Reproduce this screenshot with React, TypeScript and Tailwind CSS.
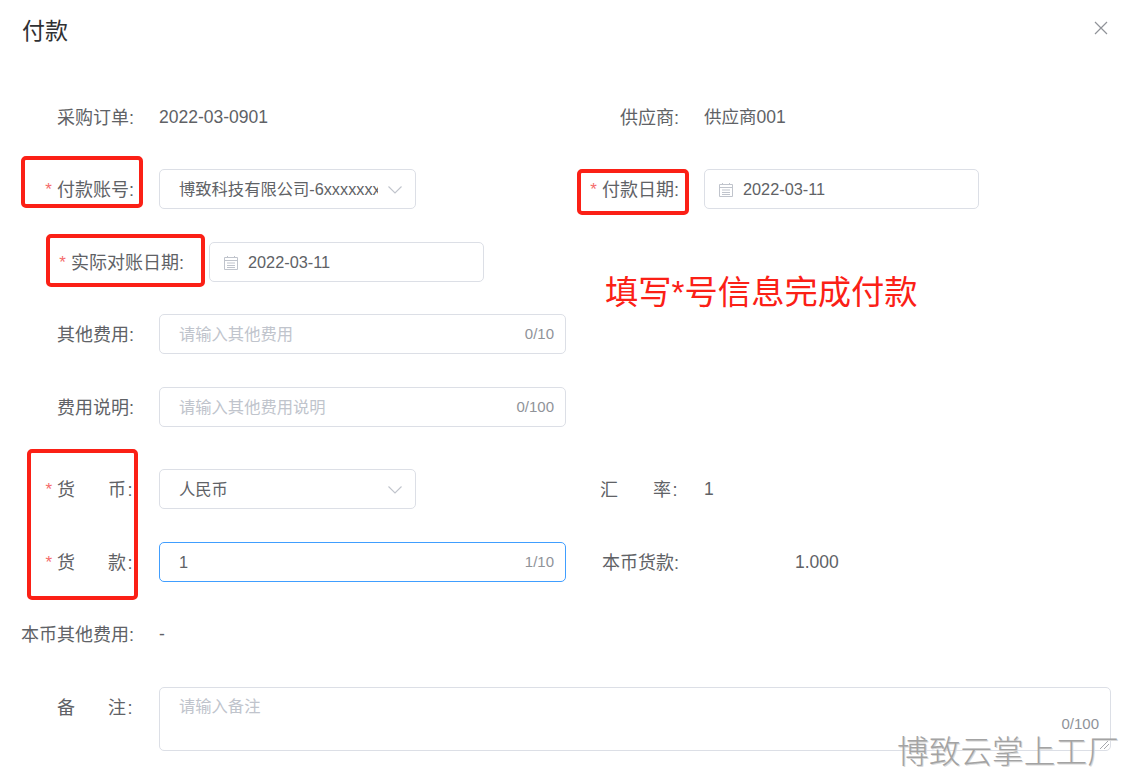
import type { ReactNode } from 'react'

const FONT = 'font-["Liberation_Sans","Noto_Sans_CJK_SC",sans-serif]'

function Label({ children, width, required }: { children: ReactNode; width: number; required?: boolean }) {
  return (
    <div style={{ width }} className="flex h-10 shrink-0 items-center justify-end whitespace-nowrap pt-[2px] text-[18px] text-[#606266]">
      {required && <span className="mr-[5px] text-[17px] leading-[22px] text-[#f56c6c]">*</span>}
      {children}
    </div>
  )
}

// 两字标签两端对齐
function Spread({ a, b, width = 77 }: { a: string; b: string; width?: number }) {
  return (
    <span style={{ width }} className="flex justify-between">
      <span>{a}</span>
      <span className="tracking-[1.5px]">{b}:</span>
    </span>
  )
}

function Value({ children }: { children: ReactNode }) {
  return <div className="ml-[25px] flex h-10 items-center text-[17.5px] text-[#606266]">{children}</div>
}

function Box({ children, width, focus }: { children: ReactNode; width: number; focus?: boolean }) {
  return (
    <div
      style={{ width }}
      className={`ml-[25px] flex h-10 items-center rounded-[5px] border pt-[1px] text-[16.3px] text-[#606266] ${
        focus ? 'border-[#409eff]' : 'border-[#dcdfe6]'
      }`}
    >
      {children}
    </div>
  )
}

function Chevron() {
  return (
    <svg width="14" height="8" viewBox="0 0 14 8" fill="none" className="shrink-0">
      <path d="M.5.5 7 7l6.5-6.5" stroke="#c0c4cc" strokeWidth="1.1" />
    </svg>
  )
}

function DateBox({ value }: { value: string }) {
  return (
    <Box width={275}>
      <svg width="16" height="16" viewBox="0 0 16 16" fill="none" className="ml-[13px] shrink-0">
        <path d="M1.5 2.5h13v12h-13zM1.5 5.5h13" stroke="#c0c4cc" />
        <path d="M4.5 1v2M11.5 1v2M4 8h8M4 10.5h8M4 12.5h8" stroke="#c0c4cc" />
      </svg>
      <span className="ml-[9px]">{value}</span>
    </Box>
  )
}

function Select({ value }: { value: string }) {
  return (
    <Box width={257}>
      <span className="ml-[19px] w-[199px] overflow-hidden whitespace-nowrap">{value}</span>
      <span className="ml-[10px] flex">
        <Chevron />
      </span>
    </Box>
  )
}

function CountInput({ placeholder, value, count }: { placeholder?: string; value?: string; count: string }) {
  return (
    <Box width={407} focus={!!value}>
      <span className={`ml-[19px] flex-1 ${value ? '' : 'text-[#c0c4cc]'}`}>{value ?? placeholder}</span>
      <span className="mr-[11px] text-[15px] text-[#909399]">{count}</span>
    </Box>
  )
}

function Row({ left, right, className }: { left: ReactNode; right?: ReactNode; className: string }) {
  return (
    <div className={`flex ${className}`}>
      <div className="flex w-[544px] shrink-0">{left}</div>
      {right && <div className="ml-[34px] flex">{right}</div>}
    </div>
  )
}

// 标注红框
function RedBox({ className }: { className: string }) {
  return <div className={`absolute rounded-[5px] border-4 border-[#fb2016] ${className}`} />
}

export default function App() {
  return (
    <div className={`relative h-[776px] w-[1127px] overflow-hidden bg-white ${FONT}`}>
      <div className="flex items-start justify-between pl-[22px] pr-[19px] pt-[15px]">
        <h2 className="text-[23px] leading-8 text-[#303133]">付款</h2>
        <svg width="14" height="14" viewBox="0 0 14 14" fill="none" className="mt-[6px]">
          <path d="M1 1l12 12M13 1 1 13" stroke="#909399" strokeWidth="1.2" />
        </svg>
      </div>

      <div className="pl-[22px] pt-[50px]">
        <Row
          className=""
          left={
            <>
              <Label width={112}>采购订单:</Label>
              <Value>2022-03-0901</Value>
            </>
          }
          right={
            <>
              <Label width={79}>供应商:</Label>
              <Value>供应商001</Value>
            </>
          }
        />
        <Row
          className="mt-[32px]"
          left={
            <>
              <Label width={112} required>
                付款账号:
              </Label>
              <Select value="博致科技有限公司-6xxxxxxxxxxxx" />
            </>
          }
          right={
            <>
              <Label width={79} required>
                付款日期:
              </Label>
              <DateBox value="2022-03-11" />
            </>
          }
        />
        <Row
          className="mt-[33px]"
          left={
            <>
              <Label width={162} required>
                实际对账日期:
              </Label>
              <DateBox value="2022-03-11" />
            </>
          }
        />
        <Row
          className="mt-[32px]"
          left={
            <>
              <Label width={112}>其他费用:</Label>
              <CountInput placeholder="请输入其他费用" count="0/10" />
            </>
          }
        />
        <Row
          className="mt-[33px]"
          left={
            <>
              <Label width={112}>费用说明:</Label>
              <CountInput placeholder="请输入其他费用说明" count="0/100" />
            </>
          }
        />
        <Row
          className="mt-[42px]"
          left={
            <>
              <Label width={112} required>
                <Spread a="货" b="币" />
              </Label>
              <Select value="人民币" />
            </>
          }
          right={
            <>
              <Label width={79}>
                <Spread a="汇" b="率" width={79} />
              </Label>
              <Value>1</Value>
            </>
          }
        />
        <Row
          className="mt-[33px]"
          left={
            <>
              <Label width={112} required>
                <Spread a="货" b="款" />
              </Label>
              <CountInput value="1" count="1/10" />
            </>
          }
          right={
            <>
              <Label width={79}>本币货款:</Label>
              <Value>
                <span className="ml-[91px]">1.000</span>
              </Value>
            </>
          }
        />
        <Row
          className="mt-[32px]"
          left={
            <>
              <Label width={112}>本币其他费用:</Label>
              <Value>-</Value>
            </>
          }
        />
        <div className="mt-[33px] flex">
          <Label width={112}>
            <Spread a="备" b="注" />
          </Label>
          <div className="relative ml-[25px] h-16 w-[952px] rounded-[5px] border border-[#dcdfe6] text-[16.3px]">
            <span className="absolute left-[19px] top-[6px] text-[#c0c4cc]">请输入备注</span>
            <span className="absolute bottom-[15px] right-[11px] text-[15px] text-[#909399]">0/100</span>
            <svg width="12" height="12" viewBox="0 0 12 12" className="absolute bottom-0 right-0" fill="none">
              <path d="M2 11 11 2M6 11l5-5" stroke="#909399" strokeWidth="0.8" />
            </svg>
          </div>
        </div>
      </div>

      {/* 标注 */}
      <RedBox className="left-[21px] top-[156px] h-[52px] w-[122px]" />
      <RedBox className="left-[46px] top-[234px] h-[53px] w-[159px]" />
      <RedBox className="left-[577px] top-[169px] h-[46px] w-[112px]" />
      <RedBox className="left-[27px] top-[449px] h-[151px] w-[111px]" />
      <div className="absolute left-[605px] top-[271px] whitespace-nowrap text-[33.3px] leading-[44px] text-[#fb2016]">
        填写*号信息完成付款
      </div>
      <div className="absolute left-[897px] top-[733px] whitespace-nowrap text-[31.7px] font-light leading-[38px] text-[#a3a3a3] [text-shadow:1px_1px_0_#d9d9d9]">
        博致云掌上工厂
      </div>
    </div>
  )
}
